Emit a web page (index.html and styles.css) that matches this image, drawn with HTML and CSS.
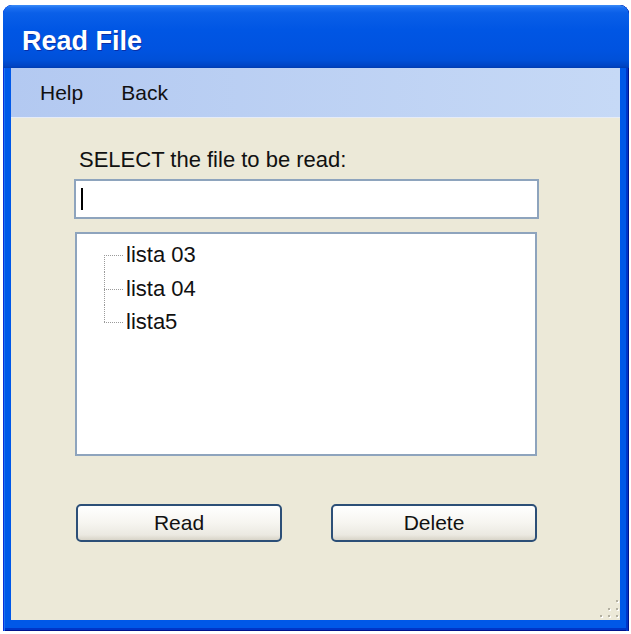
FILE: index.html
```html
<!DOCTYPE html>
<html>
<head>
<meta charset="utf-8">
<link rel="stylesheet" href="styles.css">
</head>
<body>
<div class="window">
  <div class="titlebar">Read File</div>
  <div class="frame">
    <div class="menubar">
      <span class="menu-item">Help</span>
      <span class="menu-item">Back</span>
    </div>
    <div class="content">
      <div class="label">SELECT the file to be read:</div>
      <div class="textbox"><span class="caret"></span></div>
      <div class="tree">
        <ul class="tree-list">
          <li class="tree-item first">lista 03</li>
          <li class="tree-item">lista 04</li>
          <li class="tree-item last">lista5</li>
        </ul>
      </div>
      <div class="buttons">
        <button class="btn">Read</button>
        <button class="btn">Delete</button>
      </div>
    </div>
    <svg class="grip" width="20" height="20" viewBox="0 0 20 20">
      <g fill="#fff">
        <rect x="18" y="2" width="2" height="2"/>
        <rect x="10" y="10" width="2" height="2"/><rect x="18" y="10" width="2" height="2"/>
        <rect x="2" y="17" width="2" height="2"/><rect x="10" y="17" width="2" height="2"/><rect x="18" y="17" width="2" height="2"/>
      </g>
      <g fill="#b4b1a2">
        <rect x="17" y="1" width="2" height="2"/>
        <rect x="9" y="9" width="2" height="2"/><rect x="17" y="9" width="2" height="2"/>
        <rect x="1" y="16" width="2" height="2"/><rect x="9" y="16" width="2" height="2"/><rect x="17" y="16" width="2" height="2"/>
      </g>
    </svg>
  </div>
</div>
</body>
</html>
```

FILE: styles.css
```css
html, body {
  margin: 0;
  padding: 0;
  background: #ffffff;
}

body {
  font-family: "Liberation Sans", Arial, sans-serif;
}

.window {
  margin: 5px 0 0 3px;
  width: 626px;
  height: 626px;
  display: flex;
  flex-direction: column;
  background: #0058e8;
  border-radius: 9px 9px 0 0;
  box-shadow: inset 1px 0 #0831d9, inset 2px 0 #1c72f2, inset -1px 0 #00138c, inset -3px 0 #0036c8, inset 0 -1px #00138c, inset 0 -3px #0036c8;
  overflow: hidden;
}

.titlebar {
  height: 63px;
  box-sizing: border-box;
  padding: 21px 0 0 19px;
  font-size: 27px;
  font-weight: bold;
  color: #ffffff;
  text-shadow: 1px 1px 0 #0b2fa5;
  line-height: 30px;
  background: linear-gradient(to bottom, #3b8cf7 0px, #1a6ef0 3px, #0a5fe8 8px, #0056e4 25px, #0053e0 45px, #0050d8 55px, #0044c4 61px, #003cb0 63px);
  border-radius: 9px 9px 0 0;
}

.frame {
  flex: 1;
  margin: 0 9px 11px 8px;
  background: #ece9d8;
  display: flex;
  flex-direction: column;
  position: relative;
}

.menubar {
  height: 50px;
  display: flex;
  align-items: center;
  gap: 38px;
  padding-left: 29px;
  background: linear-gradient(to right, #b3c9f1, #c6d9f6);
  border-bottom: 1px solid #e6ecf7;
  box-sizing: border-box;
}

.menu-item {
  font-size: 21px;
  color: #111111;
}

.content {
  padding: 29px 0 0 63px;
  display: flex;
  flex-direction: column;
}

.label {
  font-size: 22px;
  line-height: 25px;
  color: #111111;
  padding-left: 5px;
}

.textbox {
  margin-top: 7px;
  width: 465px;
  height: 40px;
  box-sizing: border-box;
  border: 2px solid #8ea4bd;
  background: #ffffff;
  display: flex;
  align-items: center;
  padding-left: 5px;
}

.caret {
  display: block;
  width: 2px;
  height: 22px;
  background: #000000;
}

.tree {
  margin-top: 13px;
  margin-left: 1px;
  width: 462px;
  height: 224px;
  box-sizing: border-box;
  border: 2px solid #8ea4bd;
  background: #ffffff;
}

.tree-list {
  list-style: none;
  margin: 0;
  padding: 4px 0 0 49px;
}

.tree-item {
  position: relative;
  height: 33.5px;
  line-height: 33px;
  font-size: 22px;
  color: #111111;
}

.tree-item::before {
  content: "";
  position: absolute;
  left: -22px;
  top: 17px;
  width: 19px;
  border-top: 1px dotted #9a9a9a;
}

.tree-item::after {
  content: "";
  position: absolute;
  left: -22px;
  top: 0;
  height: 100%;
  border-left: 1px dotted #9a9a9a;
}

.tree-item.first::after {
  top: 17px;
  height: calc(100% - 17px);
}

.tree-item.last::after {
  height: 17px;
}

.buttons {
  margin-top: 48px;
  margin-left: 2px;
  display: flex;
  gap: 49px;
}

.btn {
  width: 206px;
  height: 38px;
  box-sizing: border-box;
  border: 2px solid #2c4f77;
  border-radius: 5px;
  background: linear-gradient(to bottom, #ffffff 0%, #f6f5f0 50%, #ebe9e1 85%, #d8d4c8 100%);
  font-family: "Liberation Sans", Arial, sans-serif;
  font-size: 21px;
  color: #111111;
  padding: 0;
}

.grip {
  position: absolute;
  right: 1px;
  bottom: 1px;
}
```
